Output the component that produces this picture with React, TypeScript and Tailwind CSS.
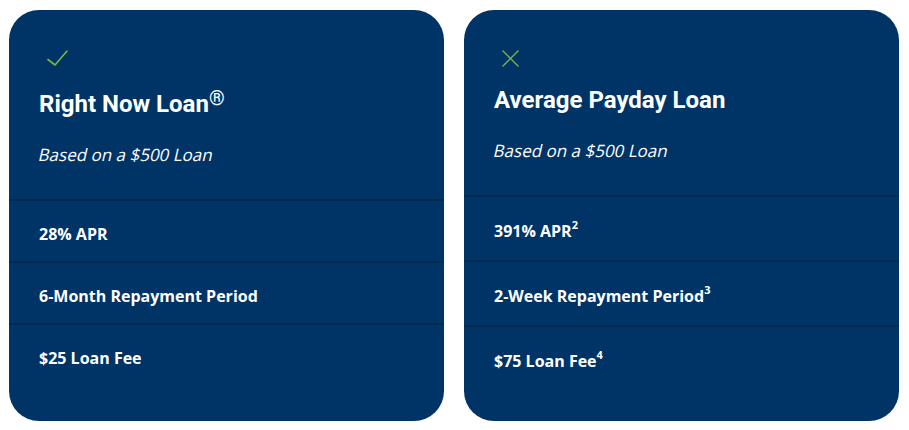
import React from "react";

type Row = { text: string; sup?: string };

function Check() {
  return (
    <svg width="21" height="16" viewBox="0 0 21 16" fill="none">
      <path d="M1 9.5 L8 15 L20 1" stroke="#78b544" strokeWidth="1.6" strokeLinecap="round" strokeLinejoin="round" />
    </svg>
  );
}

function Cross() {
  return (
    <svg width="17" height="17" viewBox="0 0 17 17" fill="none">
      <path d="M0.5 0.5 L16.5 16.5 M16.5 0.5 L0.5 16.5" stroke="#78b544" strokeWidth="1.3" />
    </svg>
  );
}

function Card({
  icon,
  title,
  reg,
  rows,
}: {
  icon: React.ReactNode;
  title: string;
  reg?: boolean;
  rows: Row[];
}) {
  return (
    <div className="flex h-[411px] flex-col overflow-hidden rounded-[30px] bg-[#003466] text-white">
      <div className="px-[30px] pt-[38px] pb-[32px]">
        <div className="flex h-[20px] items-center pl-[8px]">{icon}</div>
        <h2
          className={
            "mt-[16px] font-['Roboto',sans-serif] text-[24px] leading-[32px] font-bold " +
            (reg ? "pt-[4px]" : "")
          }
        >
          {title}
          {reg && <sup className="relative -top-[7px] align-baseline text-[20px] font-normal">®</sup>}
        </h2>
        <p className="mt-[23px] font-['Open_Sans',sans-serif] text-[17px] leading-[24px] font-normal">
          <span className="inline-block origin-left skew-x-[-13deg]">Based on a $500 Loan</span>
        </p>
      </div>
      {rows.map((r, i) => (
        <div
          key={i}
          className={
            "border-t-2 border-[#00294f] px-[30px] font-['Open_Sans',sans-serif] text-[16px] leading-[24px] font-bold " +
            (r.sup ? "pt-[22px] pb-[17px]" : "pt-[21px] pb-[15px]")
          }
        >
          {r.text}
          {r.sup && (
            <sup className="relative -top-[8px] align-baseline text-[11px] font-bold">{r.sup}</sup>
          )}
        </div>
      ))}
    </div>
  );
}

export default function App() {
  return (
    <div className="h-[430px] w-[909px] bg-white pt-[10px] pr-[10px] pl-[9px]">
      <div className="grid grid-cols-2 gap-[20px]">
        <Card
          icon={<Check />}
          title="Right Now Loan"
          reg
          rows={[{ text: "28% APR" }, { text: "6-Month Repayment Period" }, { text: "$25 Loan Fee" }]}
        />
        <Card
          icon={<Cross />}
          title="Average Payday Loan"
          rows={[
            { text: "391% APR", sup: "2" },
            { text: "2-Week Repayment Period", sup: "3" },
            { text: "$75 Loan Fee", sup: "4" },
          ]}
        />
      </div>
    </div>
  );
}
